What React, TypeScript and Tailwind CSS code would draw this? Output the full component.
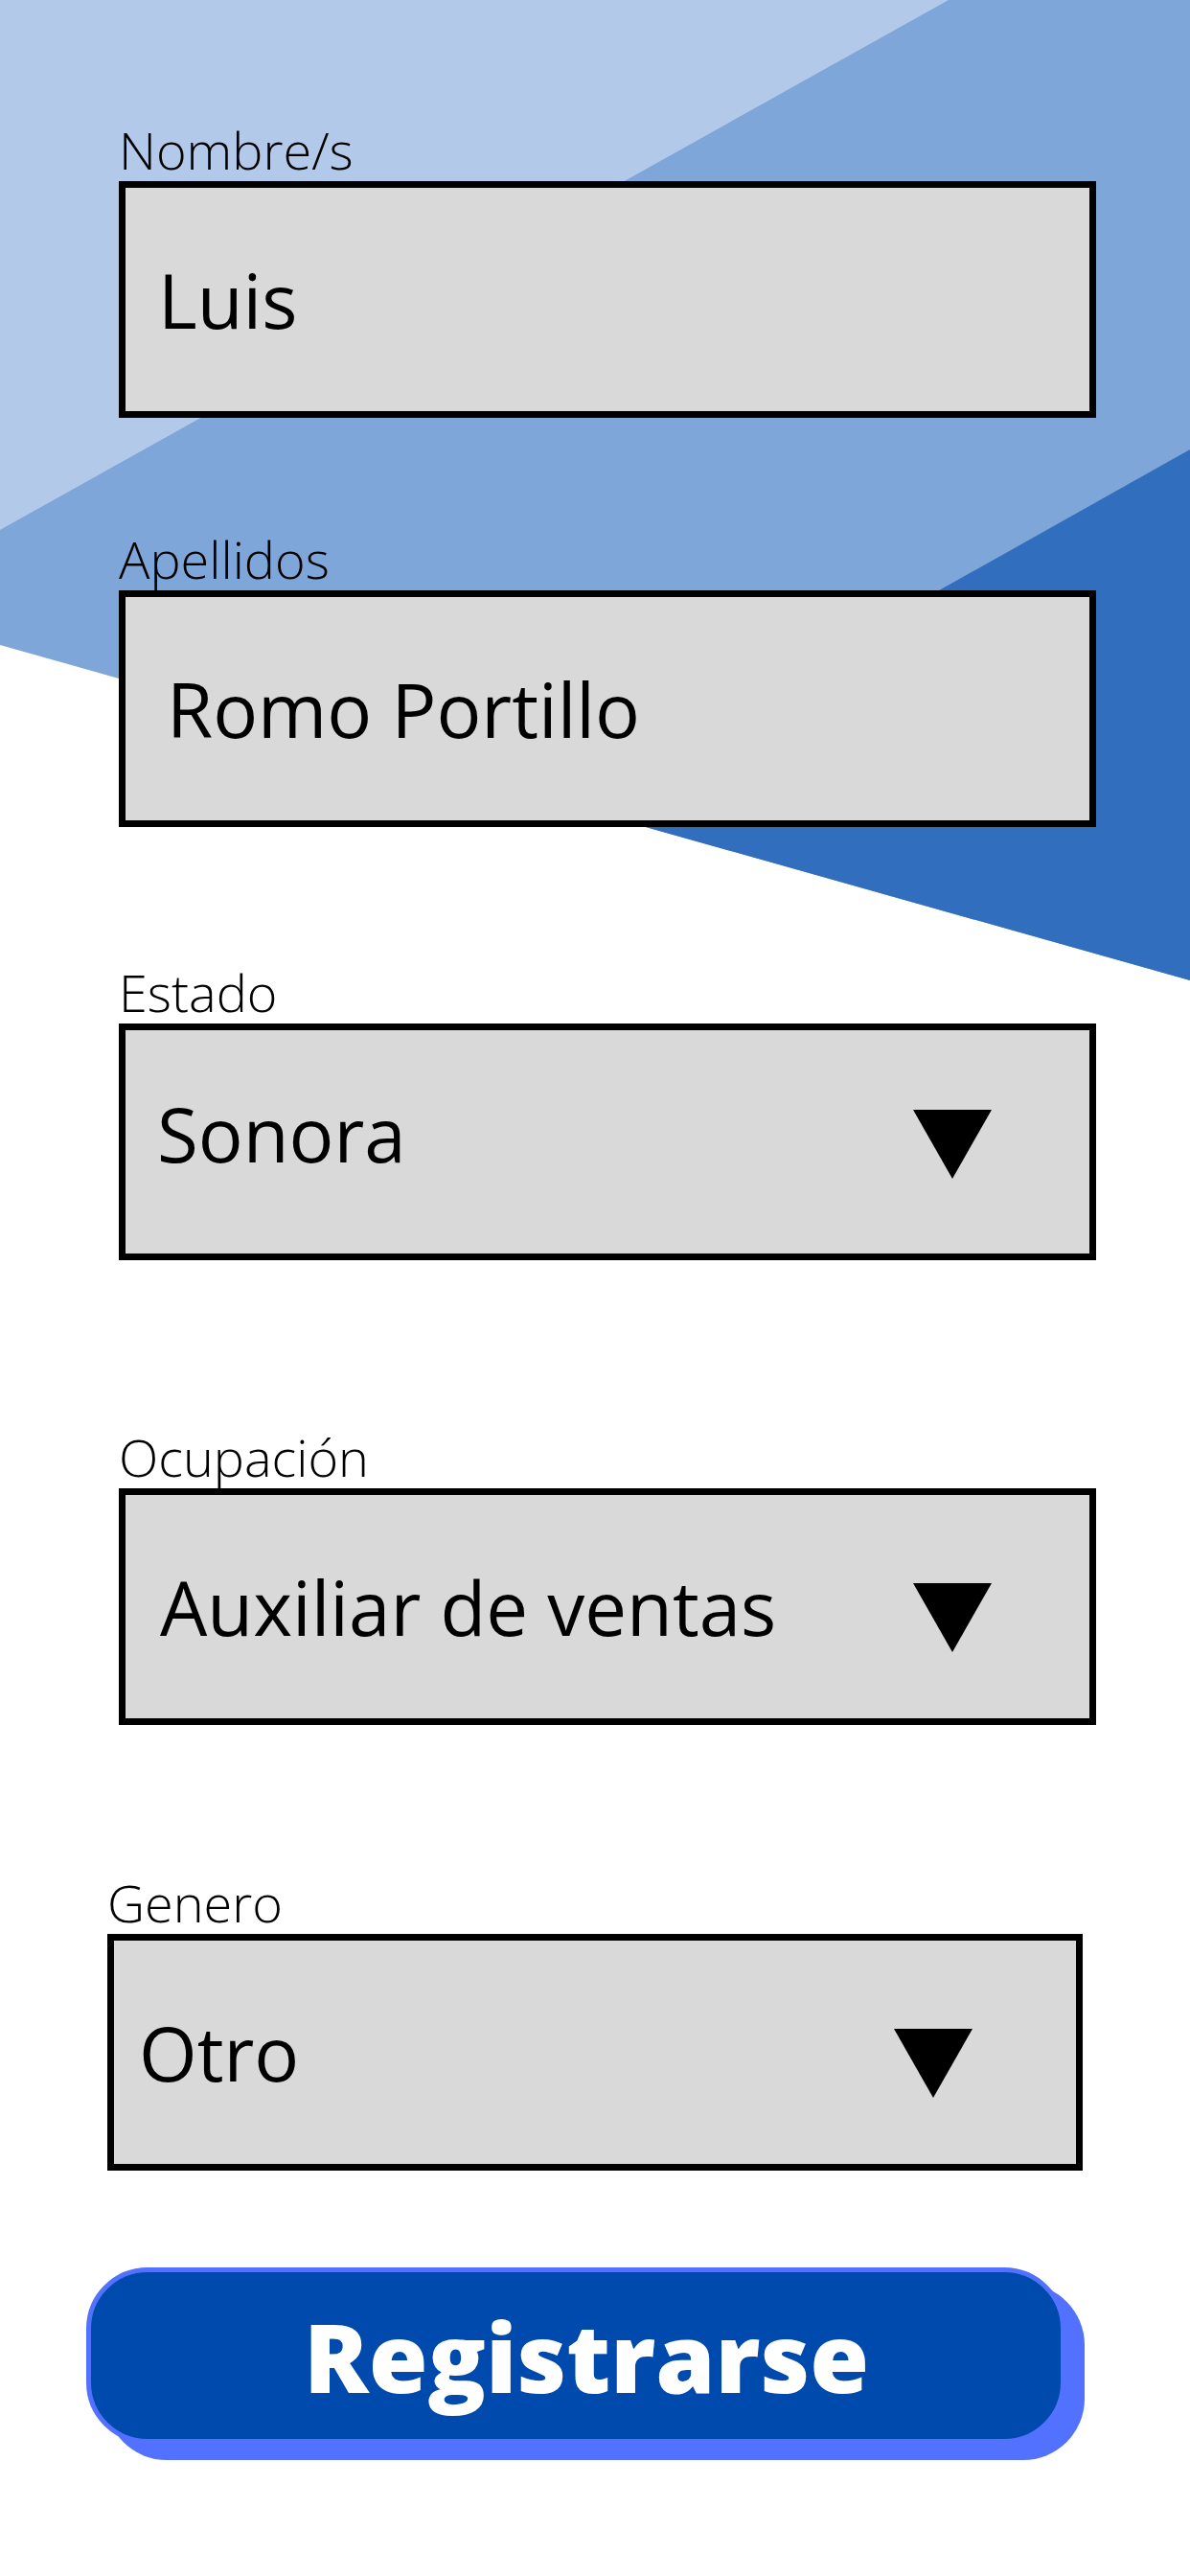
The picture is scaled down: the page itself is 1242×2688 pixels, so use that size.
import { ReactNode } from 'react'

type FieldProps = {
  label: string
  value: string
  select?: boolean
  className?: string
  boxClassName?: string
}

function Caret() {
  return (
    <svg width="82" height="72" viewBox="0 0 82 72" className="mt-[22px] shrink-0">
      <polygon points="0,0 82,0 41,72" fill="#000" />
    </svg>
  )
}

function Field({ label, value, select, className = '', boxClassName = '' }: FieldProps) {
  return (
    <div className={className}>
      <div className="text-[54px] font-light leading-none text-black">{label}</div>
      <div
        className={`mt-[6px] h-[247px] border-[7px] border-black bg-[#d9d9d9] flex items-center justify-between ${boxClassName}`}
      >
        <span className="text-[78px] leading-none text-black">{value}</span>
        {select && <Caret />}
      </div>
    </div>
  )
}

function Background({ children }: { children: ReactNode }) {
  return (
    <div className="relative w-full min-h-[2688px] bg-white overflow-hidden">
      {/* decorative shapes at the top */}
      <svg
        className="absolute top-0 left-0 w-[1242px] h-[1023px]"
        viewBox="0 0 1242 1023"
        preserveAspectRatio="none"
      >
        <polygon points="0,0 1242,0 1242,1023 0,673" fill="#7fa6d8" />
        <polygon points="0,0 990,0 0,553" fill="#b3c9e9" />
        <polygon points="1242,469 585,838 1242,1023" fill="#316ebe" />
      </svg>
      <div className="relative">{children}</div>
    </div>
  )
}

export default function App() {
  return (
    <div style={{ fontFamily: '"Open Sans", "Noto Sans", sans-serif' }}>
      <Background>
        <div className="pt-[129px] pl-[124px] w-[1144px]">
          <Field label="Nombre/s" value="Luis" boxClassName="pl-[34px]" />
          <Field label="Apellidos" value="Romo Portillo" className="mt-[120px]" boxClassName="pl-[43px]" />
          <Field
            label="Estado"
            value="Sonora"
            select
            className="mt-[145px]"
            boxClassName="pl-[33px] pr-[102px] pb-[18px]"
          />
          <Field
            label="Ocupación"
            value="Auxiliar de ventas"
            select
            className="mt-[178px]"
            boxClassName="pl-[36px] pr-[102px]"
          />
          <Field
            label="Genero"
            value="Otro"
            select
            className="mt-[158px] -ml-[12px] w-[1018px]"
            boxClassName="pl-[26px] pr-[108px]"
          />
        </div>

        <div className="pl-[90px] mt-[101px] pb-[120px]">
          <button
            type="button"
            className="w-[1022px] h-[184px] rounded-[64px] border-[5px] border-[#5271ff] bg-[#004aad] shadow-[20px_17px_0_0_#5271ff] flex items-center justify-center pl-[22px]"
          >
            <span className="text-[100px] font-extrabold leading-none text-white">Registrarse</span>
          </button>
        </div>
      </Background>
    </div>
  )
}
